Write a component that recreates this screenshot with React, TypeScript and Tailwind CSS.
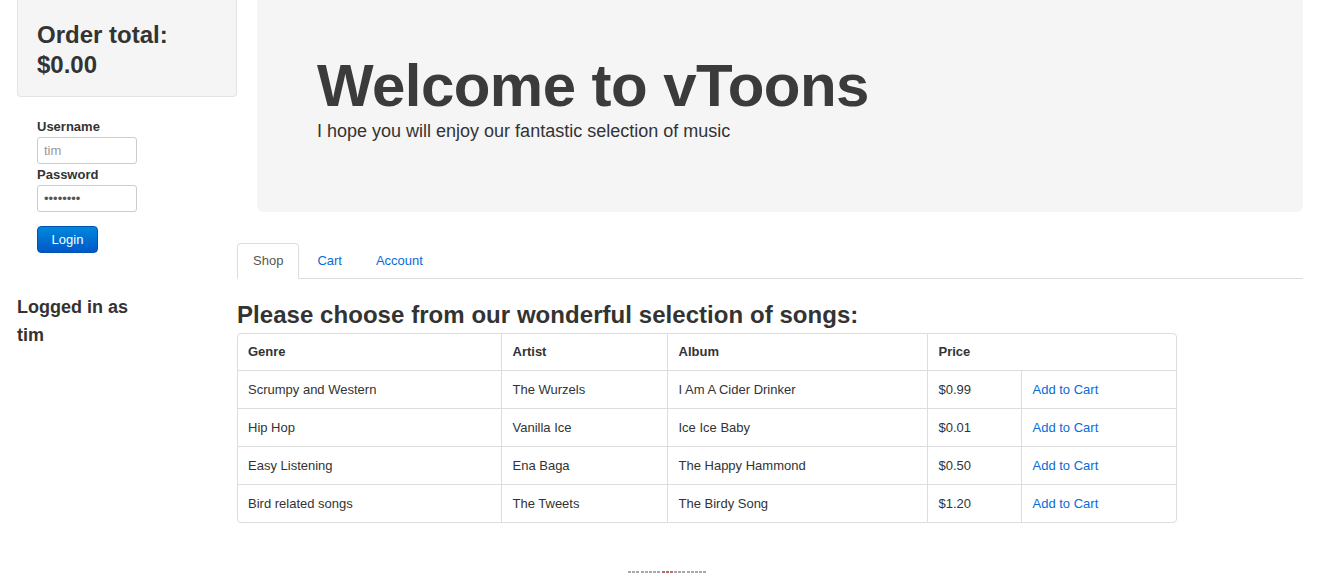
import React from "react";

const rows = [
  ["Scrumpy and Western", "The Wurzels", "I Am A Cider Drinker", "$0.99"],
  ["Hip Hop", "Vanilla Ice", "Ice Ice Baby", "$0.01"],
  ["Easy Listening", "Ena Baga", "The Happy Hammond", "$0.50"],
  ["Bird related songs", "The Tweets", "The Birdy Song", "$1.20"],
];

export default function App() {
  const dots = Array.from({ length: 19 });
  return (
    <div
      className="min-h-[573px] bg-white text-[#333] flex pl-[17px] pr-[20px]"
      style={{ fontFamily: '"Liberation Sans", Arial, sans-serif' }}
    >
      {/* Sidebar */}
      <div className="w-[220px] shrink-0">
        <div className="bg-[#f5f5f5] border border-t-0 border-[#e3e3e3] rounded-b-[4px] pl-[19px] pt-[20px] pb-[16px]">
          <h3 className="text-[24px] leading-[30px] font-bold text-[#333]">
            Order total:
            <br />
            $0.00
          </h3>
        </div>
        <form className="pl-[20px] pt-[21px]" onSubmit={(e) => e.preventDefault()}>
          <label className="block text-[13px] leading-[18px] font-bold mb-px">Username</label>
          <input
            className="block w-[100px] h-[27px] border border-[#ccc] rounded-[3px] px-[6px] text-[13px] text-[#555] placeholder:text-[#999] outline-none"
            placeholder="tim"
          />
          <label className="block text-[13px] leading-[18px] font-bold mt-[2px] mb-px">Password</label>
          <input
            type="password"
            defaultValue="password"
            className="block w-[100px] h-[27px] border border-[#ccc] rounded-[3px] px-[6px] text-[13px] text-[#555] outline-none"
          />
          <button
            type="submit"
            className="mt-[14px] w-[61px] h-[27px] rounded-[4px] border border-[#0052b4] bg-linear-to-b from-[#0088dd] to-[#0058c8] text-white text-[13px] leading-[18px]"
          >
            Login
          </button>
        </form>
        <h4 className="mt-[40px] w-[130px] text-[18px] leading-[28px] font-bold">
          Logged in as tim
        </h4>
      </div>

      {/* Main */}
      <div className="flex-1 min-w-0">
        <div className="ml-[20px] h-[212px] bg-[#f5f5f5] rounded-b-[6px] pl-[60px] pt-[56px]">
          <h1 className="text-[60px] leading-[60px] font-bold text-[#3b3b3b] tracking-[-0.55px]">
            Welcome to vToons
          </h1>
          <p className="text-[18px] leading-[30px] text-[#333]">
            I hope you will enjoy our fantastic selection of music
          </p>
        </div>

        <ul className="mt-[31px] flex border-b border-[#ddd] text-[13px] leading-[18px]">
          <li className="-mb-px mr-[2px]">
            <span className="block px-[15px] py-[8px] border border-[#ddd] border-b-white rounded-t-[4px] bg-white text-[#555]">
              Shop
            </span>
          </li>
          <li className="-mb-px mr-[2px]">
            <a className="block px-[15px] py-[8px] border border-transparent text-[#0a6bd6] cursor-pointer">Cart</a>
          </li>
          <li className="-mb-px mr-[2px]">
            <a className="block px-[15px] py-[8px] border border-transparent text-[#0a6bd6] cursor-pointer">Account</a>
          </li>
        </ul>

        <h3 className="mt-[21px] text-[24px] leading-[30px] font-bold text-[#333] tracking-[0.05px]">
          Please choose from our wonderful selection of songs:
        </h3>

        <div className="mt-[3px] w-[940px] border border-[#ddd] rounded-[4px] overflow-hidden">
          <table className="w-full border-collapse text-[13px] text-[#333]">
            <colgroup>
              <col className="w-[263px]" />
              <col className="w-[166px]" />
              <col className="w-[260px]" />
              <col className="w-[94px]" />
              <col className="w-[155px]" />
            </colgroup>
            <thead>
              <tr className="h-[36px]">
                <th className="text-left font-bold px-[10px]">Genre</th>
                <th className="text-left font-bold pl-[11px] pr-[10px] border-l border-[#ddd]">Artist</th>
                <th className="text-left font-bold pl-[11px] pr-[10px] border-l border-[#ddd]">Album</th>
                <th colSpan={2} className="text-left font-bold pl-[11px] pr-[10px] border-l border-[#ddd]">
                  Price
                </th>
              </tr>
            </thead>
            <tbody>
              {rows.map((r) => (
                <tr key={r[0]} className="h-[38px] border-t border-[#ddd]">
                  <td className="px-[10px] pt-px">{r[0]}</td>
                  <td className="pl-[11px] pr-[10px] pt-px border-l border-[#ddd]">{r[1]}</td>
                  <td className="pl-[11px] pr-[10px] pt-px border-l border-[#ddd]">{r[2]}</td>
                  <td className="pl-[11px] pr-[10px] pt-px border-l border-[#ddd]">{r[3]}</td>
                  <td className="pl-[11px] pr-[10px] pt-px border-l border-[#ddd]">
                    <a className="text-[#0a6bd6] cursor-pointer">Add to Cart</a>
                  </td>
                </tr>
              ))}
            </tbody>
          </table>
        </div>

        <div className="mt-[48px] ml-[391px] flex gap-[1.2px]">
          {dots.map((_, i) => (
            <span
              key={i}
              className={
                i >= 8 && i <= 10
                  ? "w-[3px] h-[2px] bg-[#b07070]"
                  : "w-[3px] h-[2px] bg-[#a8a8a8]"
              }
            />
          ))}
        </div>
      </div>
    </div>
  );
}
